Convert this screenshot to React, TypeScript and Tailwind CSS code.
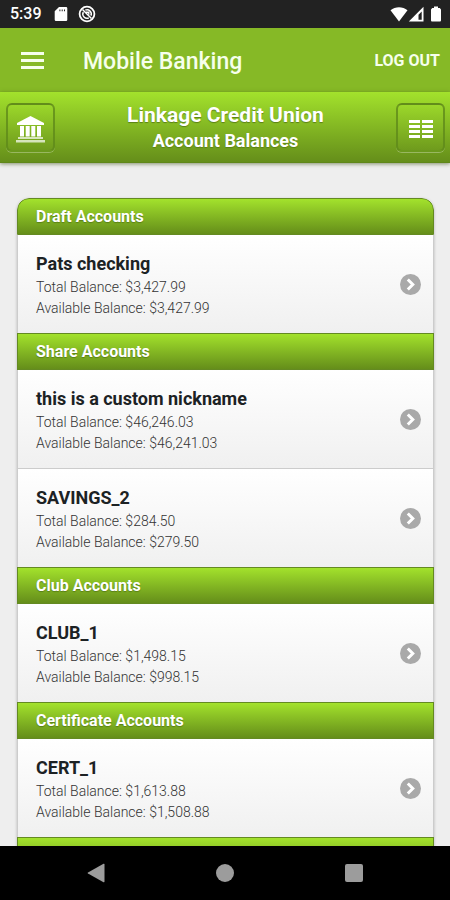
interface Account {
  name: string
  total: string
  available: string
}

interface Group {
  title: string
  accounts: Account[]
}

const groups: Group[] = [
  { title: 'Draft Accounts', accounts: [{ name: 'Pats checking', total: '$3,427.99', available: '$3,427.99' }] },
  {
    title: 'Share Accounts',
    accounts: [
      { name: 'this is a custom nickname', total: '$46,246.03', available: '$46,241.03' },
      { name: 'SAVINGS_2', total: '$284.50', available: '$279.50' },
    ],
  },
  { title: 'Club Accounts', accounts: [{ name: 'CLUB_1', total: '$1,498.15', available: '$998.15' }] },
  { title: 'Certificate Accounts', accounts: [{ name: 'CERT_1', total: '$1,613.88', available: '$1,508.88' }] },
  { title: '', accounts: [] },
]

function StatusBar() {
  return (
    <div className="flex h-7 shrink-0 items-center bg-[#222222] pl-2.5 pr-2 text-white">
      <span className="w-11 text-base font-medium">5:39</span>
      <svg className="h-4 w-3.5" viewBox="0 0 14 16" fill="currentColor">
        <path fillRule="evenodd" d="M5 1h7a1.3 1.3 0 0 1 1.3 1.3v11.4A1.3 1.3 0 0 1 12 15H2a1.3 1.3 0 0 1-1.3-1.3V5.2zM5.4 3.4v1.8h1V3.4zm2.3 0v1.8h1V3.4zm2.3 0v1.8h1V3.4z" />
      </svg>
      <svg className="ml-2.5 h-4.5 w-4.5" viewBox="0 0 18 18" fill="none" stroke="currentColor">
        <circle cx="9" cy="9" r="7.4" strokeWidth="1.8" />
        <path d="M5.3 7.2a4.2 4.2 0 0 0 5.5 5.7M7.3 5.1a4.2 4.2 0 0 1 5.6 5.5" strokeWidth="1.5" />
        <path d="M4.5 4.5l9 9" strokeWidth="1.5" />
        <path d="M8 7.2h2.8v2.6" strokeWidth="1.4" />
      </svg>
      <svg className="ml-auto h-4 w-4.5" viewBox="0 0 18 16" fill="currentColor">
        <path d="M9 15.5L.5 4.2C5.3.3 12.7.3 17.5 4.2z" />
      </svg>
      <svg className="h-4 w-4" viewBox="0 0 16 16" fill="currentColor">
        <path fillRule="evenodd" d="M15.5.8v14.7H.8zM13.7 5.5l-3.2 3.2v5h3.2z" />
      </svg>
      <svg className="ml-1.5 h-4 w-3" viewBox="0 0 12 16" fill="currentColor">
        <path d="M4 .5h4v1.500h1.800L11 3.500v10.700c0 .8-.5 1.300-1.300 1.300H2.300c-.8 0-1.300-.5-1.300-1.300V3.500L2.200 2H4z" />
      </svg>
    </div>
  )
}

function AppBar() {
  return (
    <header className="flex h-16 shrink-0 items-center bg-[#86b926] pl-[21px] pr-2.5 text-[#f6ffec]">
      <button type="button" aria-label="Menu" className="flex w-[62px] flex-col gap-1">
        <span className="h-[3px] w-[23px] bg-current" />
        <span className="h-[3px] w-[23px] bg-current" />
        <span className="h-[3px] w-[23px] bg-current" />
      </button>
      <h1 className="pt-1 text-[23px] font-medium">Mobile Banking</h1>
      <button type="button" className="ml-auto pt-0.5 text-base font-bold">LOG OUT</button>
    </header>
  )
}

function PageHeader() {
  return (
    <div className="relative z-10 flex h-[71px] shrink-0 items-center justify-between border-b border-[#5f8719] bg-linear-to-b from-[#a3e22c] to-[#658e1a] pl-1.5 pr-[5px] text-white shadow-[0_1px_4px_rgba(60,80,20,0.6)]">
      <button type="button" aria-label="Home" className="flex size-[49px] items-center justify-center rounded-md border-2 border-[#5f8a1a]/80 bg-linear-to-b from-[#9bd72a] to-[#6f9b1d] pt-1 shadow-[0_1px_0_rgba(255,255,255,0.3)]">
        <svg className="h-7 w-[31px] shrink-0" viewBox="0 0 31 28" fill="currentColor">
          <path d="M15.5 1L29 8v2H2V8z" />
          <path d="M5 11h4v10.500H5zM10.700 11h4v10.500h-4zM16.300 11h4v10.500h-4zM22 11h4v10.500h-4z" />
          <path d="M3 22h25v2H3zM1 25h29v2.500H1z" fillOpacity="0.7" />
        </svg>
      </button>
      <div className="text-center font-bold [text-shadow:0_1px_1px_#5a8016]">
        <h2 className="text-[21px] leading-7">Linkage Credit Union</h2>
        <p className="text-lg leading-6">Account Balances</p>
      </div>
      <button type="button" aria-label="Accounts" className="flex size-[49px] items-center justify-center rounded-md border-2 border-[#5f8a1a]/80 bg-linear-to-b from-[#9bd72a] to-[#6f9b1d] pt-1 pl-0.5 shadow-[0_1px_0_rgba(255,255,255,0.3)]">
        <svg className="h-[18px] w-6" viewBox="0 0 24 18" fill="currentColor">
          <path d="M0 0h11v3H0zM13 0h11v3H13zM0 5h11v3H0zM13 5h11v3H13zM0 10h11v3H0zM13 10h11v3H13zM0 15h11v3H0zM13 15h11v3H13z" />
        </svg>
      </button>
    </div>
  )
}

function AccountRow({ account }: { account: Account }) {
  return (
    <li className="border-x border-[#cccccc] not-first:border-t">
      <button type="button" className="flex h-[98px] w-full items-center justify-between bg-linear-to-b from-white to-[#f0f0f0] pl-[18px] pr-3 text-left">
        <span className="pt-0.5">
          <span className="block text-lg leading-[26px] font-bold text-[#1c2224]">{account.name}</span>
          <span className="block text-sm leading-[21px] font-light text-[#333333]">Total Balance: {account.total}</span>
          <span className="block text-sm leading-[21px] font-light text-[#333333]">Available Balance: {account.available}</span>
        </span>
        <svg className="size-[21px]" viewBox="0 0 21 21" fill="none">
          <circle cx="10.5" cy="10.5" r="10.5" fill="#a9a9a9" />
          <path d="M7.8 5.5l5 5-5 5" stroke="white" strokeWidth="3" />
        </svg>
      </button>
    </li>
  )
}

function AccountGroup({ group }: { group: Group }) {
  return (
    <section className="group">
      <div className="h-[37px] border border-[#648a22] bg-linear-to-b from-[#a3e22c] to-[#658e1a] px-[18px] group-first:rounded-t-xl">
        <h3 className="text-base leading-[35px] font-bold text-white [text-shadow:0_1px_1px_#5a8016]">{group.title}</h3>
      </div>
      <ul>
        {group.accounts.map(account => (
          <AccountRow key={account.name} account={account} />
        ))}
      </ul>
    </section>
  )
}

export default function App() {
  return (
    <div className="flex h-screen flex-col overflow-hidden bg-[#eeeeee] font-[Roboto,sans-serif]">
      <StatusBar />
      <AppBar />
      <PageHeader />
      <main className="min-h-0 flex-1 overflow-hidden pl-[17px] pr-4 pt-[35px]">
        <div className="overflow-hidden rounded-t-xl shadow-[0_1px_3px_rgba(0,0,0,0.25)]">
          {groups.map(group => (
            <AccountGroup key={group.title} group={group} />
          ))}
        </div>
      </main>
      <nav className="grid h-[54px] shrink-0 grid-cols-3 bg-black px-[31px] text-[#9c9c9c]">
        <button type="button" aria-label="Back" className="flex items-center justify-center">
          <svg className="h-5 w-[18px]" viewBox="0 0 18 20" fill="currentColor">
            <path d="M16.5.8a.7.7 0 0 1 1 .6v17.2a.7.7 0 0 1-1 .6L1 10.6a.7.7 0 0 1 0-1.2z" />
          </svg>
        </button>
        <button type="button" aria-label="Home" className="flex items-center justify-center">
          <span className="size-[18px] rounded-full bg-current" />
        </button>
        <button type="button" aria-label="Recent apps" className="flex items-center justify-center">
          <span className="size-[18px] rounded-xs bg-current" />
        </button>
      </nav>
    </div>
  )
}
